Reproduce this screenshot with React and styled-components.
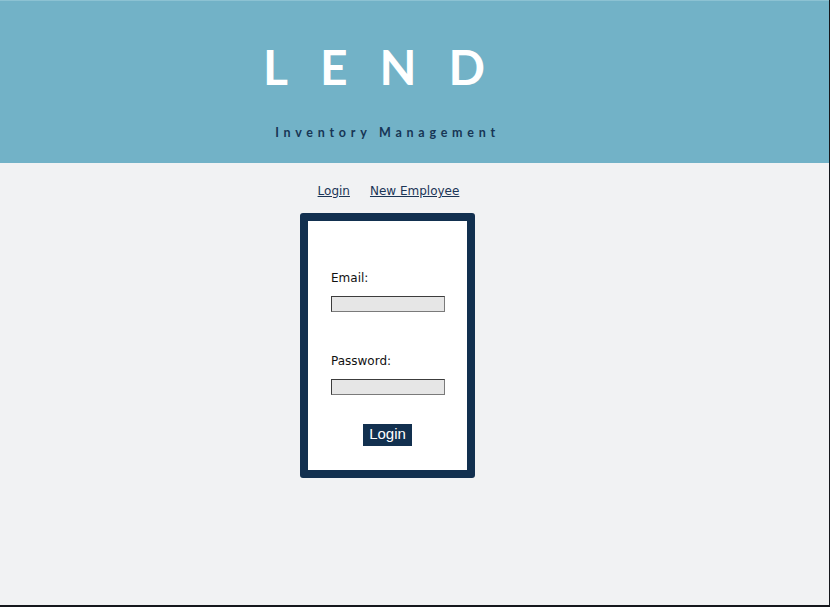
import React from "react";
import styled, { createGlobalStyle } from "styled-components";

const Global = createGlobalStyle`
  html, body { margin: 0; padding: 0; }
  body { background: #f1f2f3; }
`;

const Page = styled.div`
  box-sizing: border-box;
  min-height: 607px;
  background: #f1f2f3;
  border-right: 1px solid #15171c;
  border-bottom: 2px solid #15171c;
  display: flex;
  flex-direction: column;
`;

const Header = styled.header`
  height: 163px;
  background: #72b2c7;
  border-top: 1px solid #8cc2d3;
  box-sizing: border-box;
`;

const Column = styled.div`
  width: 775px;
  display: flex;
  flex-direction: column;
  align-items: center;
`;

const Title = styled.h1`
  margin: 37px 0 0 0;
  padding-left: 5px;
  font-family: Lato, "Open Sans", sans-serif;
  font-weight: 700;
  font-size: 48px;
  line-height: 58px;
  letter-spacing: 32px;
  color: #ffffff;
`;

const Subtitle = styled.h2`
  margin: 29px 0 0 0;
  padding-left: 0;
  font-family: Lato, "Open Sans", sans-serif;
  font-weight: 700;
  font-size: 12.5px;
  line-height: 16px;
  letter-spacing: 4.75px;
  color: #173555;
`;

const Nav = styled.nav`
  display: flex;
  gap: 20px;
  margin-top: 20px;
  padding-left: 2px;
`;

const NavLink = styled.a`
  font-family: "DejaVu Sans", sans-serif;
  font-size: 12px;
  line-height: 16px;
  color: #1b3556;
  text-decoration: underline;
  cursor: pointer;
`;

const Card = styled.form`
  margin-top: 14px;
  width: 175px;
  box-sizing: border-box;
  background: #ffffff;
  border: 8px solid #12304f;
  border-radius: 3px;
  padding: 49px 23px 24px 23px;
  display: flex;
  flex-direction: column;
`;

const Label = styled.label`
  font-family: "DejaVu Sans", sans-serif;
  font-size: 12px;
  line-height: 16px;
  color: #111;
  margin-top: ${(p) => p.$gap || 0}px;
`;

const Input = styled.input`
  box-sizing: border-box;
  width: 114px;
  height: 16px;
  margin: 10px 0 0 0;
  padding: 0;
  background: #e6e6e6;
  border: 1px solid #7a7a7a;
  border-top-color: #3c3c3c;
  border-left-color: #3c3c3c;
  outline: none;
`;

const Button = styled.button`
  align-self: center;
  margin-top: 29px;
  padding: 1px 6px 3px 6px;
  background: #12304f;
  color: #ffffff;
  border: none;
  border-radius: 0;
  font-family: "Liberation Sans", Arial, sans-serif;
  font-size: 15px;
  line-height: 18px;
`;

export default function App() {
  return (
    <>
      <Global />
      <Page>
        <Header>
          <Column>
            <Title>LEND</Title>
            <Subtitle>Inventory Management</Subtitle>
          </Column>
        </Header>
        <Column>
          <Nav>
            <NavLink>Login</NavLink>
            <NavLink>New Employee</NavLink>
          </Nav>
          <Card onSubmit={(e) => e.preventDefault()}>
            <Label>Email:</Label>
            <Input type="text" />
            <Label $gap={41}>Password:</Label>
            <Input type="password" />
            <Button type="submit">Login</Button>
          </Card>
        </Column>
      </Page>
    </>
  );
}
